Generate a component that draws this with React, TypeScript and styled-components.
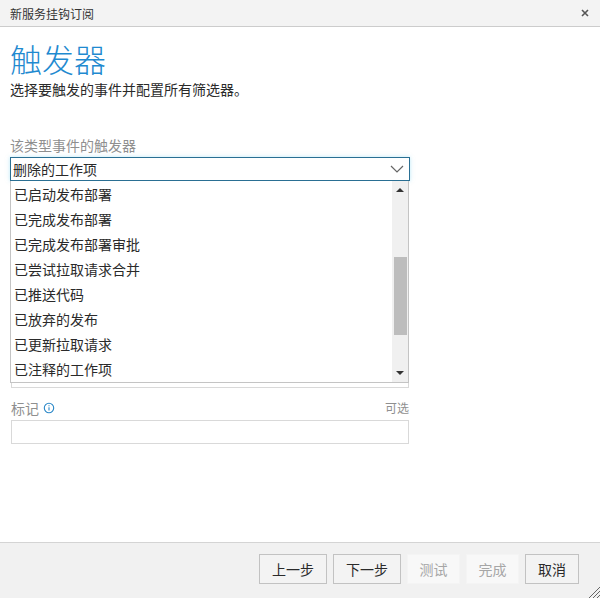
import styled, { createGlobalStyle } from 'styled-components';

const triggers = ['已启动发布部署', '已完成发布部署', '已完成发布部署审批', '已尝试拉取请求合并', '已推送代码', '已放弃的发布', '已更新拉取请求', '已注释的工作项'];

function App() {
  return (
    <>
      <GlobalStyle />
      <Dialog>
        <TitleBar>
          <DialogTitle>新服务挂钩订阅</DialogTitle>
          <CloseIcon width="8" height="8" viewBox="0 0 8 8">
            <path d="M1 1l6 6M7 1L1 7" stroke="#555" strokeWidth="1.6" />
          </CloseIcon>
        </TitleBar>
        <Content>
          <Heading>触发器</Heading>
          <Description>选择要触发的事件并配置所有筛选器。</Description>
          <FieldLabel>该类型事件的触发器</FieldLabel>
          <SelectWrap>
            <SelectBox>
              删除的工作项
              <svg width="14" height="8" viewBox="0 0 14 8">
                <path d="M1 1l6 6 6-6" fill="none" stroke="#666" strokeWidth="1.2" />
              </svg>
            </SelectBox>
            <Dropdown>
              <OptionList>
                {triggers.map((t) => (
                  <Option key={t}>{t}</Option>
                ))}
              </OptionList>
              <ScrollBar>
                <Arrow viewBox="0 0 8 4" width="8" height="4">
                  <path d="M0 4l4-4 4 4z" fill="#333" />
                </Arrow>
                <Thumb />
                <Arrow viewBox="0 0 8 4" width="8" height="4">
                  <path d="M0 0l4 4 4-4z" fill="#333" />
                </Arrow>
              </ScrollBar>
            </Dropdown>
          </SelectWrap>
          <HiddenField />
          <TagLabelRow>
            <TagLabel>
              标记
              <svg width="12" height="12" viewBox="0 0 12 12">
                <circle cx="6" cy="6" r="4.7" fill="none" stroke="#2b88c8" strokeWidth="1.1" />
                <path d="M6 5.2v3.4M6 3.2v1.1" stroke="#2b88c8" strokeWidth="1.1" />
              </svg>
            </TagLabel>
            <OptionalHint>可选</OptionalHint>
          </TagLabelRow>
          <TextInput />
        </Content>
        <Footer>
          <FooterButton $wide>上一步</FooterButton>
          <FooterButton $wide>下一步</FooterButton>
          <FooterButton disabled>测试</FooterButton>
          <FooterButton disabled>完成</FooterButton>
          <FooterButton>取消</FooterButton>
          <ResizeGrip width="12" height="12" viewBox="0 0 12 12">
            <path d="M1 12L12 1M5 12l7-7M9 12l3-3" stroke="#666" strokeWidth="1" />
          </ResizeGrip>
        </Footer>
      </Dialog>
    </>
  );
}

export default App;

const GlobalStyle = createGlobalStyle`
  body {
    margin: 0;
    background: #ffffff;
    font-family: "Noto Sans CJK SC", "Liberation Sans", sans-serif;
    color: #222222;
  }
`;

const Dialog = styled.div`
  position: relative;
  width: 600px;
  height: 598px;
  display: flex;
  flex-direction: column;
  overflow: hidden;
`;

const TitleBar = styled.div`
  height: 26px;
  flex: none;
  padding: 0 11px 0 10px;
  display: flex;
  align-items: center;
  justify-content: space-between;
  background: #f3f3f3;
  border-bottom: 1px solid #cccccc;
`;

const DialogTitle = styled.div`
  font-size: 12px;
  color: #333333;
`;

const CloseIcon = styled.svg`
  display: block;
`;

const Content = styled.div`
  flex: 1;
  padding: 0 190px 0 10px;
`;

const Heading = styled.h1`
  margin: 11px 0 0;
  font-size: 32px;
  line-height: 40px;
  font-weight: 300;
  color: #1f8ad0;
`;

const Description = styled.p`
  margin: 1px 0 0;
  font-size: 14px;
  line-height: 20px;
  color: #2a2a2a;
`;

const FieldLabel = styled.div`
  margin-top: 36px;
  font-size: 14px;
  line-height: 20px;
  color: #8f8f8f;
`;

const SelectWrap = styled.div`
  position: relative;
  margin-top: 2px;
`;

const SelectBox = styled.div`
  height: 24px;
  box-sizing: border-box;
  padding: 0 3px 0 2px;
  display: flex;
  align-items: center;
  justify-content: space-between;
  border: 1px solid #2a6f93;
  box-shadow: 0 0 4px rgba(120, 210, 240, 0.5);
  font-size: 14px;
  color: #2a2a2a;
  background: #ffffff;

  svg {
    margin-right: 2px;
  }
`;

const Dropdown = styled.div`
  position: absolute;
  z-index: 2;
  left: 0;
  top: 24px;
  width: 399px;
  height: 202px;
  box-sizing: border-box;
  display: flex;
  background: #ffffff;
  border: 1px solid #c4c4c4;
  border-top: 0;
`;

const OptionList = styled.div`
  flex: 1;
  height: 201px;
  overflow: hidden;
`;

const Option = styled.div`
  height: 25.05px;
  padding-left: 3px;
  display: flex;
  align-items: center;
  font-size: 14px;
  color: #2a2a2a;
`;

const ScrollBar = styled.div`
  width: 16px;
  height: 201px;
  flex: none;
  display: flex;
  flex-direction: column;
  align-items: center;
  background: #f0f0f0;
  padding: 7px 0;
  box-sizing: border-box;
`;

const Arrow = styled.svg`
  flex: none;
`;

const Thumb = styled.div`
  width: 13px;
  height: 78px;
  margin: 65px 0 auto 1px;
  background: #bdbdbd;
`;

const HiddenField = styled.div`
  height: 24px;
  margin: 183px 0 0 1px;
  width: 398px;
  box-sizing: border-box;
  border: 1px solid #d9d9d9;
`;

const TagLabelRow = styled.div`
  margin: 10px 0 0 1px;
  width: 398px;
  display: flex;
  justify-content: space-between;
  font-size: 14px;
  line-height: 20px;
  color: #8f8f8f;
`;

const TagLabel = styled.span`
  display: flex;
  align-items: center;
  gap: 4px;
`;

const OptionalHint = styled.span`
  font-size: 12px;
`;

const TextInput = styled.div`
  height: 24px;
  margin: 2px 0 0 1px;
  width: 398px;
  box-sizing: border-box;
  border: 1px solid #d9d9d9;
  background: #ffffff;
`;

const Footer = styled.div`
  height: 56px;
  flex: none;
  box-sizing: border-box;
  padding: 11px 21px 0 0;
  display: flex;
  justify-content: flex-end;
  align-items: flex-start;
  gap: 6px;
  background: #f1f1f1;
  border-top: 1px solid #d4d4d4;
`;

const FooterButton = styled.button<{ $wide?: boolean }>`
  width: ${(props) => (props.$wide ? '68px' : '54px')};
  height: 30px;
  padding: 0;
  box-sizing: border-box;
  font-family: inherit;
  font-size: 14px;
  color: #2a2a2a;
  background: #f3f3f3;
  border: 1px solid #c2c2c2;

  &:disabled {
    width: 53px;
    color: #a6a6a6;
    background: #f8f8f8;
    border-color: #f4f4f4;
  }
`;

const ResizeGrip = styled.svg`
  position: absolute;
  right: 0;
  bottom: 0;
`;
